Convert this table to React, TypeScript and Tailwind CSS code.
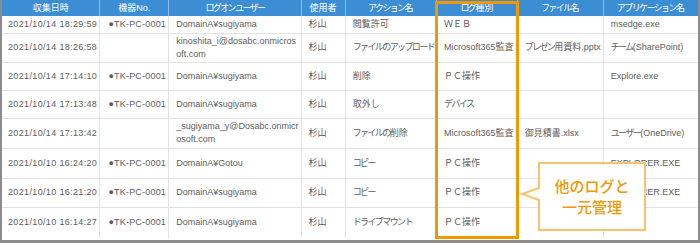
import React from "react"

const cols = [98, 69, 132, 50, 85, 81, 82, 99]
const heads = ["収集日時", "機器No.", "ログオンユーザー", "使用者", "アクション名", "ログ種別", "ファイル名", "アプリケーション名"]

const rows: { h: number; c: string[] }[] = [
  { h: 17, c: ["2021/10/14 18:29:59", "●TK-PC-0001", "DomainA¥sugiyama", "杉山", "閲覧許可", "ＷＥＢ", "", "msedge.exe"] },
  { h: 29, c: ["2021/10/14 18:26:58", "", "kinoshita_i@dosabc.onmicros\noft.com", "杉山", "ファイルのアップロード", "Microsoft365監査", "プレゼン用資料.pptx", "チーム(SharePoint)"] },
  { h: 28, c: ["2021/10/14 17:14:10", "●TK-PC-0001", "DomainA¥sugiyama", "杉山", "削除", "ＰＣ操作", "", "Explore.exe"] },
  { h: 28, c: ["2021/10/14 17:13:48", "●TK-PC-0001", "DomainA¥sugiyama", "杉山", "取外し", "デバイス", "", ""] },
  { h: 30, c: ["2021/10/14 17:13:42", "", "_sugiyama_y@Dosabc.onmicr\nosoft.com", "杉山", "ファイルの削除", "Microsoft365監査", "御見積書.xlsx", "ユーザー(OneDrive)"] },
  { h: 30, c: ["2021/10/10 16:24:20", "●TK-PC-0001", "DomainA¥Gotou", "杉山", "コピー", "ＰＣ操作", "", "EXPLORER.EXE"] },
  { h: 29, c: ["2021/10/10 16:21:20", "●TK-PC-0001", "DomainA¥sugiyama", "杉山", "コピー", "ＰＣ操作", "", "EXPLORER.EXE"] },
  { h: 31, c: ["2021/10/10 16:14:27", "●TK-PC-0001", "DomainA¥sugiyama", "杉山", "ドライブマウント", "ＰＣ操作", "", ""] },
]

// kana runs are set tighter, like the proportional UI font in the picture
function Txt({ t }: { t: string }) {
  const parts = t.split(/([\u3040-\u30ff]+)/)
  return (
    <>
      {parts.map((p, i) =>
        /^[\u3040-\u30ff]+$/.test(p) ? (
          <span key={i} className="tracking-[-1.6px]">
            {p}
          </span>
        ) : (
          <React.Fragment key={i}>{p}</React.Fragment>
        )
      )}
    </>
  )
}

export default function App() {
  return (
    <div
      className="relative w-[700px] h-[243px] bg-white border-l-2 border-r-2 border-b-[3px] border-[#8c8c8c] overflow-hidden"
      style={{ fontFamily: '"Liberation Sans", "Noto Sans CJK JP", sans-serif' }}
    >
      <table className="table-fixed border-collapse text-[9px] text-[#5c5c5c]">
        <colgroup>
          {cols.map((w, i) => (
            <col key={i} style={{ width: w }} />
          ))}
        </colgroup>
        <thead>
          <tr className="h-[16px] bg-[#3b8ed4] text-white">
            {heads.map((t, i) => (
              <th key={i} className="p-0 font-normal text-center leading-none whitespace-nowrap border-l border-[#8fbde6] first:border-l-0">
                <Txt t={t} />
              </th>
            ))}
          </tr>
        </thead>
        <tbody>
          {rows.map((r, ri) => (
            <tr key={ri} style={{ height: r.h }} className="border-b border-[#e2e2e2] last:border-b-0">
              {r.c.map((t, ci) => (
                <td
                  key={ci}
                  className={`p-0 pr-[2px] align-middle leading-[13px] whitespace-pre border-l border-[#e2e2e2] first:border-l-0 overflow-hidden ${ci === 1 ? "pl-[8px] tracking-[0.2px]" : ci === 0 ? "pl-[6px] tracking-[0.35px]" : "pl-[7px]"}`}
                >
                  <Txt t={t} />
                </td>
              ))}
            </tr>
          ))}
        </tbody>
      </table>

      {/* highlight column */}
      <div className="absolute left-[433px] top-[1px] w-[84px] h-[238px] border-[3px] border-[#f39800]" />

      {/* callout */}
      <div className="absolute left-[517px] top-[161px] w-[128px] h-[71px]">
        <svg width="128" height="71" className="absolute inset-0">
          <path
            d="M20 2 H126 V69 H20 V39 L3 33 L20 27 Z"
            fill="#ffffff"
            stroke="#f8c26a"
            strokeWidth="2"
          />
        </svg>
        <div className="absolute left-[20px] top-0 w-[106px] h-[71px] flex flex-col items-center justify-center text-[15px] leading-[21px] text-[#f39800] font-medium">
          <span>他のログと</span>
          <span>一元管理</span>
        </div>
      </div>
    </div>
  )
}
